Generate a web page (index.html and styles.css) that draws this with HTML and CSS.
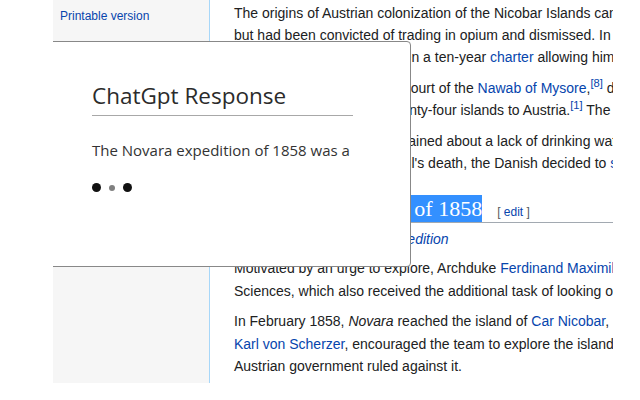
FILE: index.html
```html
<!DOCTYPE html>
<html lang="en">
<head>
<meta charset="utf-8">
<title>Austrian colonization of the Nicobar Islands</title>
<link rel="stylesheet" href="styles.css">
</head>
<body>
<div class="frame">
  <nav class="sidebar">
    <a class="side-link" href="#">Printable version</a>
  </nav>
  <main class="content">
    <p>The origins of Austrian colonization of the Nicobar Islands can be traced to William Bolts, a Dutchman who had served<br>but had been convicted of trading in opium and dismissed. In<br>1775, William Bolts was given a ten-year <a href="#">charter</a> allowing him to trade in the East Indies.</p>
    <p>Bolts had spent time at the court of the <a href="#">Nawab of Mysore</a>,<sup><a href="#">[8]</a></sup> declared the islands<br>In 1778 he ceded all the twenty-four islands to Austria.<sup><a href="#">[1]</a></sup> The <a href="#">Danish East India Company</a></p>
    <p>The few settlers soon complained about a lack of drinking water and<br>Following the Imperial consul's death, the Danish decided to <a href="#">settle</a> the islands again.</p>
    <h2 class="section-title"><span class="sel"><span class="sel-hidden">Novara expedition </span>of 1858</span><span class="editsection">[ <a href="#">edit</a> ]</span></h2>
    <div class="hatnote">Main article: <a href="#">Novara expedition</a></div>
    <p>Motivated by an urge to explore, Archduke <a href="#">Ferdinand Maximilian</a> asked the Imperial Academy of<br>Sciences, which also received the additional task of looking out for a colony.</p>
    <p>In February 1858, <i>Novara</i> reached the island of <a href="#">Car Nicobar</a>, <a href="#">scientist</a><br><a href="#">Karl von Scherzer</a>, encouraged the team to explore the islands<br>Austrian government ruled against it.</p>
  </main>
  <section class="popup">
    <h1 class="popup-title">ChatGpt Response</h1>
    <p class="popup-text">The Novara expedition of 1858 was a</p>
    <div class="dots"><span class="dot"></span><span class="dot small"></span><span class="dot"></span></div>
  </section>
</div>
</body>
</html>
```
FILE: styles.css
```css
body {
  margin: 0;
  background: #fff;
}

.frame {
  margin-left: 53px;
  width: 560px;
  height: 383px;
  display: flex;
  overflow: hidden;
  position: relative;
  font-family: "Liberation Sans", Arial, sans-serif;
}

a {
  color: #0645ad;
  text-decoration: none;
}

.sidebar {
  flex: none;
  width: 157px;
  box-sizing: border-box;
  background: #f6f6f6;
  border-right: 1px solid #a7d7f9;
  padding: 7.5px 0 0 7px;
}

.side-link {
  display: block;
  font-size: 12px;
  line-height: 16px;
}

.content {
  flex: none;
  width: 900px;
  padding: 1.5px 0 0 24px;
  color: #202122;
  font-size: 14px;
  line-height: 22.4px;
}

.content p {
  margin: 0 0 8px;
  white-space: nowrap;
}

.content sup {
  font-size: 0.8em;
  line-height: 1;
  vertical-align: super;
}

.section-title {
  font-family: "Liberation Serif", "Times New Roman", serif;
  font-weight: normal;
  font-size: 22px;
  line-height: 27.3px;
  margin: 20.4px 0 5.25px;
  border-bottom: 1px solid #a2a9b1;
  white-space: nowrap;
  color: #000;
}

.sel {
  background: #3390ff;
  color: #fff;
  padding: 1px 0;
}

.sel-hidden {
  letter-spacing: 0.65px;
}

.editsection {
  font-family: "Liberation Sans", Arial, sans-serif;
  font-size: 12px;
  line-height: 1;
  margin-left: 15px;
  color: #54595d;
}

.hatnote {
  font-style: italic;
  padding-left: 22.4px;
  margin: 0 0 6.65px;
  white-space: nowrap;
}

.popup {
  position: absolute;
  top: 41px;
  left: -20px;
  width: 378px;
  height: 226px;
  box-sizing: border-box;
  border: 1px solid #888;
  border-radius: 4px;
  background: #fff;
  padding: 38.8px 57px 0 58px;
  font-family: "Open Sans", "Noto Sans", sans-serif;
}

.popup-title {
  margin: 0;
  font-size: 22.5px;
  line-height: 30px;
  font-weight: normal;
  color: #2b2b2b;
  padding-bottom: 4.2px;
  border-bottom: 1px solid #a8a8a8;
}

.popup-text {
  margin: 24.5px 0 0;
  font-size: 15px;
  line-height: 20px;
  color: #333;
  white-space: nowrap;
}

.dots {
  display: flex;
  align-items: center;
  gap: 8px;
  height: 9px;
  margin-top: 22.7px;
}

.dot {
  width: 9px;
  height: 9px;
  border-radius: 50%;
  background: #111;
}

.dot.small {
  width: 6px;
  height: 6px;
  background: #808080;
}
```
